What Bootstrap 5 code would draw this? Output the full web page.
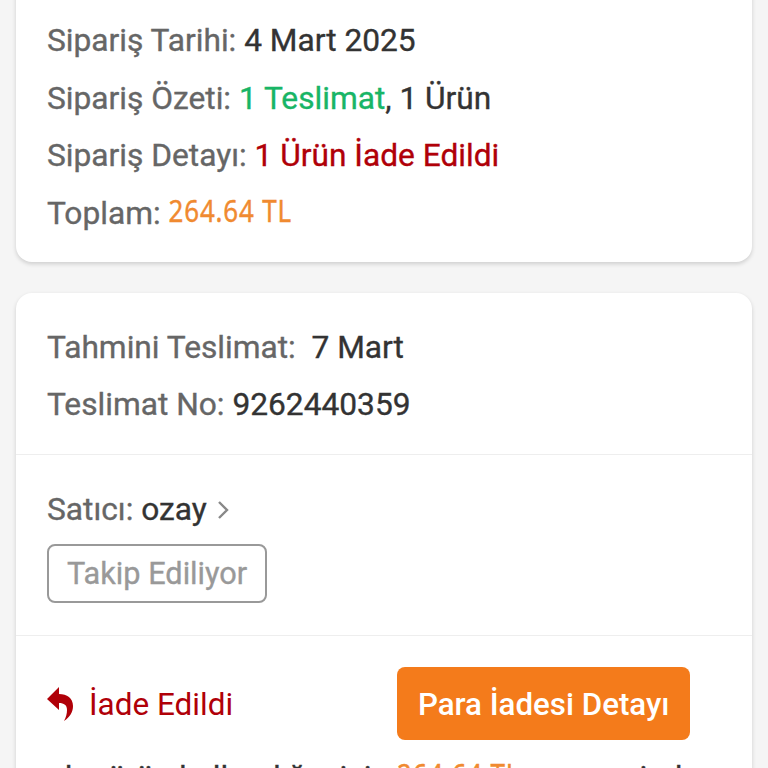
<!doctype html>
<html lang="tr">
<head>
<meta charset="utf-8">
<link href="https://cdn.jsdelivr.net/npm/bootstrap@5.3.0/dist/css/bootstrap.min.css" rel="stylesheet">
<style>
html,body{height:768px;overflow:hidden;background:#f5f5f5}
body{font-family:Roboto,"Liberation Sans",sans-serif;font-size:31.7px;font-weight:400;-webkit-text-stroke:.35px currentColor;line-height:36px;color:#333}
.sheet{margin:-36px 16px 0;display:flex;flex-direction:column;gap:31px}
.panel{background:#fff;border-radius:16px;box-shadow:0 2px 4px rgba(0,0,0,.16)}
.top-body{padding:59px 31px 30px}
.rowline{margin-bottom:21.6px;white-space:nowrap}
.rowline:last-child{margin-bottom:0}
.lbl{color:#666}
.green{color:#18b566}
.red{color:#b00008}
.amount{display:inline-block;color:#f08a30;font-family:"Noto Sans",sans-serif;letter-spacing:.8px;font-size:26px;transform:translateY(-2px) scaleY(1.16);transform-origin:50% 78%}
.sec{padding:37px 31px 31px;border-bottom:1px solid #eee}
.sec2{padding-bottom:32px;padding-top:37px}
.follow{border:2px solid #999;border-radius:8px;color:#999;font-size:30.7px;line-height:36px;padding:9.5px 18px;margin-top:16px;background:#fff;display:block}
.chev{margin-left:2px}
.refund{color:#b00008;font-size:31.5px;-webkit-text-stroke:0}
.refund-text{padding-top:3px}
.detail{background:#f47b1b;color:#fff;border:0;border-radius:8px;font-size:31.3px;line-height:36px;padding:19.5px 20.5px 17.5px;margin-right:31px;font-weight:500;-webkit-text-stroke:0}
.foot{padding:31px 31px 0}
.cut{margin-top:20px;padding-left:18px;white-space:nowrap}
</style>
</head>
<body>
<div class="sheet">
  <div class="panel top-body">
    <div class="rowline"><span class="lbl">Sipariş Tarihi:</span> 4 Mart 2025</div>
    <div class="rowline"><span class="lbl">Sipariş Özeti:</span> <span class="green">1 Teslimat</span>, 1 Ürün</div>
    <div class="rowline"><span class="lbl">Sipariş Detayı:</span> <span class="red">1 Ürün İade Edildi</span></div>
    <div class="rowline"><span class="lbl">Toplam:</span> <span class="amount">264.64 TL</span></div>
  </div>
  <div class="panel">
    <div class="sec">
      <div class="rowline"><span class="lbl">Tahmini Teslimat:</span>&nbsp; 7 Mart</div>
      <div class="rowline"><span class="lbl">Teslimat No:</span> 9262440359</div>
    </div>
    <div class="sec sec2">
      <div class="d-flex align-items-center gap-2"><span><span class="lbl">Satıcı:</span> ozay</span>
        <svg class="chev" width="12" height="20" viewBox="0 0 12 20" fill="none" stroke="#888" stroke-width="2.4"><path d="M2 2l8 8-8 8"/></svg></div>
      <button class="btn follow" type="button">Takip Ediliyor</button>
    </div>
    <div class="foot">
      <div class="d-flex justify-content-between align-items-center">
        <div class="refund d-flex align-items-center gap-3">
          <svg width="26" height="34" viewBox="0 0 26 34" fill="#b00008"><path d="M12 0 0 12l12 11v-7c5 0 8 2 8 7 0 4-1 7-3 11 6-4 9-9 9-15C26 11 20 7 12 7z"/></svg>
          <span class="refund-text">İade Edildi</span>
        </div>
        <button class="btn detail" type="button">Para İadesi Detayı</button>
      </div>
      <div class="cut">bu ürün kullandığın için <span class="amount">264.64 TL</span> paranız iade</div>
    </div>
  </div>
</div>
</body>
</html>
